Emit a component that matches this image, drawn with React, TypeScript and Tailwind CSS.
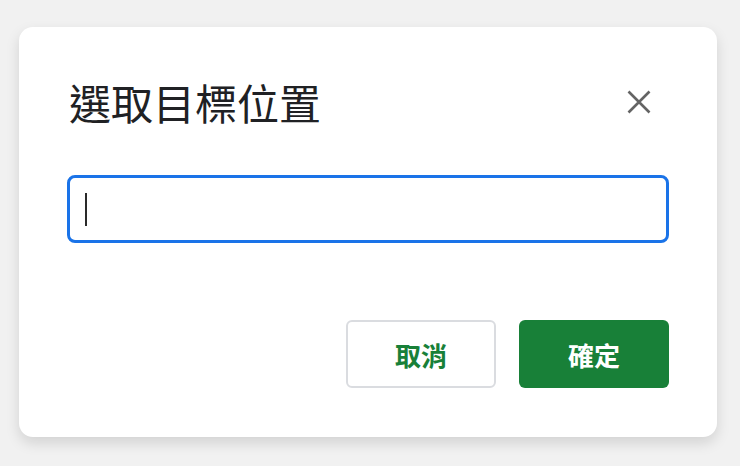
import { useEffect, useRef } from 'react';

function CloseIcon() {
  return (
    <svg width="24" height="24" viewBox="0 0 24 24" fill="none">
      <path d="M1.5 1.5L22.5 22.5M22.5 1.5L1.5 22.5" stroke="#646464" strokeWidth="2.6" />
    </svg>
  );
}

export default function App() {
  const inputRef = useRef<HTMLInputElement>(null);

  useEffect(() => {
    inputRef.current?.focus();
  }, []);

  return (
    <div
      className="h-[466px] w-[740px] overflow-hidden bg-[#f1f1f1] pt-[27px] pl-[19px]"
      style={{ fontFamily: '"Noto Sans CJK TC", "Noto Sans", sans-serif' }}
    >
      <div className="flex h-[410px] w-[698px] flex-col rounded-[14px] bg-white px-[48px] pt-[51px] shadow-[0_6px_14px_rgba(0,0,0,0.13)]">
        <div className="flex items-center justify-between">
          <h1 className="ml-[2px] text-[42px] leading-[48px] font-normal text-[#202124]">選取目標位置</h1>
          <button className="mr-[10px] flex h-[40px] w-[40px] items-center justify-center">
            <CloseIcon />
          </button>
        </div>

        <div className="relative mt-[49px]">
          <input
            ref={inputRef}
            type="text"
            className="h-[68px] w-full rounded-[8px] border-[3px] border-[#1a73e8] px-[15px] text-[24px] text-[#202124] caret-transparent outline-none"
          />
          <span className="pointer-events-none absolute left-[18px] top-[18px] h-[33px] w-[2px] bg-[#2a2a2a]" />
        </div>

        <div className="mt-[77px] flex justify-end gap-[23px]">
          <button className="h-[68px] w-[150px] rounded-[6px] border-2 border-[#dadce0] bg-white text-[26px] font-bold text-[#188038]">
            取消
          </button>
          <button className="h-[68px] w-[150px] rounded-[6px] bg-[#188038] text-[26px] font-bold text-white">
            確定
          </button>
        </div>
      </div>
    </div>
  );
}
